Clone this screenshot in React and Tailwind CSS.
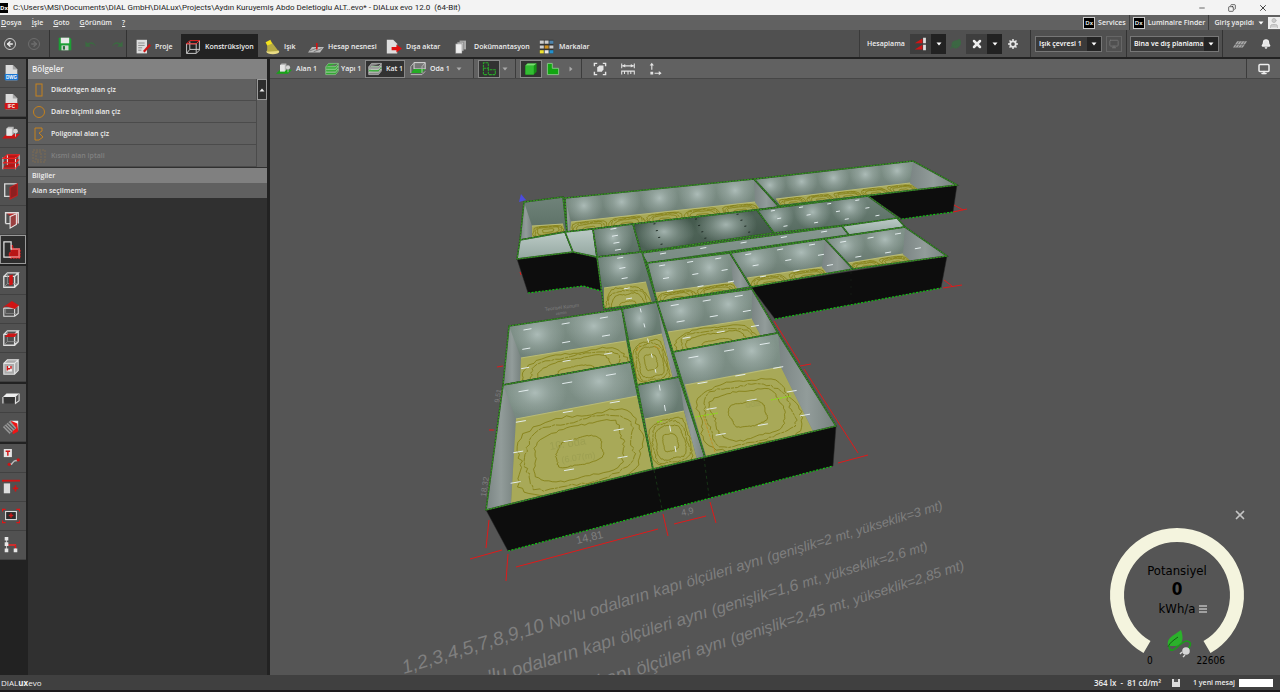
import React from 'react';
import { ArrowLeft, ArrowRight, Bell, Leaf, X, Minus, Copy, User, Monitor } from 'lucide-react';

const WHITE = '#e4e4e4';
const RED = '#d01414';

function Caret({ className = 'text-white' }) {
  return (
    <svg viewBox="0 0 6 4" className={`h-1 w-1.5 shrink-0 ${className}`}>
      <path d="M0.5 0.5H5.5L3 3.5Z" fill="currentColor" />
    </svg>
  );
}

function Icon({ children, className = 'h-[18px] w-[18px]' }) {
  return (
    <svg viewBox="0 0 20 20" fill="none" strokeWidth="1.2" className={`shrink-0 ${className}`}>
      {children}
    </svg>
  );
}

function DocIcon({ label, color }) {
  return (
    <Icon>
      <path d="M4 1H12L17 6V18H4Z" fill="#dcdcdc" />
      <path d="M12 1V6H17" fill="#a5a5a5" />
      <rect x="3" y="11" width="15" height="7" rx="1" fill={color} />
      <text x="10.5" y="16.4" textAnchor="middle" fontSize="5" fontWeight="bold" fill="#fff" fontFamily="Liberation Sans, sans-serif">{label}</text>
    </Icon>
  );
}

function SiteIcon({ ground = RED, className }) {
  return (
    <Icon className={className}>
      <path d="M0 16L5 11H20L15 16Z" fill={ground} />
      <path d="M5 5L7 3H13V11L11 13H5Z" fill="#b8b8b8" />
      <rect x="5" y="5" width="6" height="8" fill="#e6e6e6" />
      <circle cx="15" cy="8" r="2.6" fill="#d5d5d5" />
      <path d="M15 10V14" stroke="#bbb" />
    </Icon>
  );
}

function Cube({ fill }) {
  return (
    <Icon>
      <path d="M2 6H14V18H2ZM2 6L6 2H18L14 6M18 2V14L14 18" stroke="#dedede" strokeWidth="1.5" />
      <path d="M6 2V14L2 18M6 14H18" stroke="#9a9a9a" strokeWidth="0.8" />
      <path d={fill} fill={RED} />
    </Icon>
  );
}

const railGroups = [
  [
    { name: 'DWG', icon: <DocIcon label="DWG" color="#1976d2" /> },
    { name: 'IFC', icon: <DocIcon label="IFC" color={RED} /> },
  ],
  [
    { name: 'Arazi', icon: <SiteIcon /> },
    {
      name: 'Kat',
      icon: (
        <Icon>
          <path d="M1 6L6 2H19L15 6ZM1 11L6 7H19L15 11ZM1 16L6 12H19L15 16Z" fill="#b81414" />
          <path d="M1 5V18M15 5V18M19 2V14M6 2V13" stroke="#ddd" />
          <path d="M1 6H15L19 2H6ZM1 11H15L19 7M1 17H15L19 12" stroke="#f02020" />
        </Icon>
      ),
    },
    {
      name: 'Kapı',
      icon: (
        <Icon>
          <path d="M9 16H3V2H16V4" stroke="#d8d8d8" strokeWidth="1.5" />
          <path d="M9 6L17 2V15L9 19Z" fill="#8e2020" stroke="#c22020" />
        </Icon>
      ),
    },
    {
      name: 'Pencere',
      icon: (
        <Icon>
          <path d="M4 2H18V14L10 18V6Z" fill="#b82a2a" />
          <path d="M4 14V2H18V14M4 14H9" stroke="#ddd" strokeWidth="1.6" />
          <path d="M9 6L16 3V15L9 19Z" fill="#9a4040" stroke="#e6e6e6" />
        </Icon>
      ),
    },
    {
      name: 'Bölgeler',
      active: true,
      icon: (
        <Icon>
          <path d="M9 5H11V9H19V19H7V13H9Z" fill="#b81616" stroke="#e02020" strokeDasharray="2 1" />
          <path d="M1 1H9V9H18V18H1Z" stroke="#dedede" strokeWidth="1.4" />
          <path d="M10 9H18V18H9" stroke="#f04040" />
        </Icon>
      ),
    },
  ],
  [
    { name: 'Sütun', icon: <Cube fill="M8 5L12 4V15L8 16Z" /> },
    {
      name: 'Çatı',
      icon: (
        <Icon>
          <path d="M2 9H14V18H2ZM18 6V15L14 18M14 9L18 6" stroke="#ddd" />
          <path d="M0 9L11 1L19 6L14 10L5 7Z" fill="#d01414" />
          <path d="M4 10V15H16" stroke="#999" strokeWidth="0.7" />
        </Icon>
      ),
    },
    { name: 'Tavan', icon: <Cube fill="M3 9L7 5H17L14 9Z" /> },
    {
      name: 'Kesit',
      icon: (
        <Icon>
          <path d="M2 6L6 2H18V14L14 18H2Z" fill="#aaa" />
          <path d="M2 6H14V18H2ZM2 6L6 2H18L14 6M18 2V14L14 18" stroke="#e4e4e4" />
          <rect x="5" y="9" width="6" height="6" fill="#eee" />
          <path d="M6 9V14M10 9V12M6 12H9" stroke={RED} strokeWidth="1.6" />
        </Icon>
      ),
    },
  ],
  [
    {
      name: 'Mobilya',
      icon: (
        <Icon>
          <path d="M1 9L5 5H19L15 9Z" fill="#eee" />
          <path d="M1 9H15L13 16H3Z" fill="#353535" />
          <path d="M1 9V16M15 9V16L19 13V5" stroke="#ddd" />
        </Icon>
      ),
    },
    {
      name: 'Malzeme',
      icon: (
        <Icon>
          <path d="M9 3H18V14Z" fill="#eee" />
          <path d="M10 3L17 6L18 15L12 18Z" fill="#ee1515" />
          <path d="M1 10L9 3L16 11L8 18Z" fill="#999" />
          <path d="M3 9L10 16M5 7L12 14M7 5L14 12M2 12L8 18" stroke="#555" />
        </Icon>
      ),
    },
  ],
  [
    {
      name: 'Metin',
      icon: (
        <Icon>
          <rect x="2" y="0" width="9" height="9" fill="#e5e5e5" />
          <path d="M4 2.5H9M6.5 2.5V7.5" stroke={RED} strokeWidth="1.6" />
          <path d="M8 16C12 20 11 11 17 13" stroke="#bbb" strokeWidth="1.6" />
          <circle cx="8" cy="17" r="1.8" fill={RED} />
          <circle cx="18" cy="12" r="1.8" fill={RED} />
        </Icon>
      ),
    },
    {
      name: 'Hizala',
      icon: (
        <Icon>
          <path d="M0 3H20" stroke={RED} strokeWidth="2" />
          <rect x="2" y="6" width="7" height="11" fill="#dedede" />
          <path d="M15 8V15M12 11.5H18" stroke={RED} strokeWidth="1.8" />
        </Icon>
      ),
    },
    {
      name: 'Çerçeve',
      icon: (
        <Icon>
          <path d="M0.6 5V2.6H4M16 2.6H19.4V5M19.4 15V17.4H16M4 17.4H0.6V15" stroke="#e01515" />
          <rect x="4" y="5" width="12" height="9" fill="#2c2c2c" stroke="#ddd" />
          <path d="M10 7V12M7.5 9.5H12.5" stroke={RED} strokeWidth="1.6" />
        </Icon>
      ),
    },
    {
      name: 'Yapı ağacı',
      icon: (
        <Icon>
          <path d="M5 3V16M5 10H15V16" stroke="#bbb" />
          <path d="M7 10H15V14" stroke="#e01515" strokeWidth="1.6" />
          <path d="M3 1H7V5H3ZM3 7H7V11H3ZM3 14H7V18H3ZM13 14H17V18H13Z" fill="#e6e6e6" />
        </Icon>
      ),
    },
  ],
];

const modes = [
  {
    name: 'Proje',
    width: 'w-[54px]',
    icon: (
      <Icon className="h-4 w-4">
        <path d="M2 1H15V18H2Z" fill="#ddd" />
        <path d="M4 5H12M4 8H12M4 11H9M4 14H8" stroke="#888" />
        <path d="M10 15L18 6L20 8L12 17Z" fill={RED} />
      </Icon>
    ),
  },
  {
    name: 'Konstrüksiyon',
    width: 'w-[77px]',
    active: true,
    icon: (
      <Icon className="h-4 w-4">
        <path d="M2 6H14V18H2ZM14 6L18 2V14L14 18M2 18L6 13H18M6 3V13" stroke="#ccc" />
        <path d="M2 6L6 2H18L14 6Z" stroke="#f02020" />
      </Icon>
    ),
  },
  {
    name: 'Işık',
    width: 'w-[44px]',
    icon: (
      <Icon className="h-4 w-4">
        <ellipse cx="11" cy="16" rx="8" ry="3" fill="#e9dc85" />
        <path d="M4 5L9 3L18 15L4 16Z" fill="#b5aa45" />
        <path d="M2 4L8 1L10 6L4 8Z" fill="#f2e21c" />
      </Icon>
    ),
  },
  {
    name: 'Hesap nesnesi',
    width: 'w-[78px]',
    icon: (
      <Icon className="h-4 w-4">
        <path d="M0 17L5 10H20L15 17Z" fill="#bbb" />
        <path d="M2 15L12 11M7 16L17 12" stroke="#777" />
        <path d="M11 5V13" stroke={RED} strokeWidth="2" />
      </Icon>
    ),
  },
  {
    name: 'Dışa aktar',
    width: 'w-[68px]',
    icon: (
      <Icon className="h-4 w-4">
        <path d="M1 1H9L14 6V18H1Z" fill="#dedede" />
        <path d="M7 10H13V7L20 12L13 17V14H7Z" fill="#e01010" />
      </Icon>
    ),
  },
  {
    name: 'Dokümantasyon',
    width: 'w-[85px]',
    icon: (
      <Icon className="h-4 w-4">
        <path d="M7 2H15V13H7Z" fill="#aaa" />
        <path d="M4 4H12V15H4Z" fill="#c5c5c5" stroke="#666" strokeWidth="0.6" />
        <path d="M2 6H10V18H2Z" fill="#eee" stroke="#777" strokeWidth="0.6" />
      </Icon>
    ),
  },
  {
    name: 'Markalar',
    width: 'w-[54px]',
    icon: (
      <Icon className="h-4 w-4">
        <path d="M1 1H18V18H1Z" fill="#333" />
        <path d="M1 2H6V6H1ZM7 2H12V6H7ZM1 8H6V12H1ZM13 8H18V12H13Z" fill="#ccc" />
        <path d="M13 2H18V6H13Z" fill="#4d84ae" />
        <path d="M7 8H12V12H7Z" fill="#d09020" />
        <path d="M1 14H6V18H1Z" fill="#eee12e" />
        <path d="M7 14H12V18H7Z" fill="#e8e8e8" />
        <path d="M13 14H18V18H13Z" fill="#2191cf" />
      </Icon>
    ),
  },
];

const regionTools = [
  { name: 'Dikdörtgen alan çiz', shape: <rect x="4" y="1" width="6" height="12" /> },
  { name: 'Daire biçimli alan çiz', shape: <circle cx="7" cy="7" r="5.5" /> },
  { name: 'Poligonal alan çiz', shape: <path d="M3 1H10V4L7 6L11 10L7 13H3Z" /> },
  { name: 'Kısmi alan iptali', disabled: true, shape: <path d="M1 1H13V13H1ZM4 3H9V11H4Z" strokeDasharray="2 1" /> },
];

// Corners run clockwise from the far left one.
const rooms = [
  { id: 'a', top: [[524, 202], [563, 197], [567, 232], [520, 240]], floor: [[532, 226], [563, 224], [565, 232], [532, 238]], left: true, tone: 'dim' },
  { id: 'b', top: [[565, 198], [754, 179], [779, 207], [567, 232]], floor: [[571, 222], [755, 202], [760, 209], [570, 231]], left: true, right: true, spots: 5, cells: 5, tone: 'mid' },
  { id: 'c', top: [[754, 179], [913, 161], [957, 185], [779, 206]], floor: [[776, 199], [910, 183], [918, 189], [780, 205]], right: true, spots: 5, cells: 5, tone: 'mid' },
  { id: 'd', top: [[520, 240], [565, 232], [573, 252], [517, 259]], tone: 'light' },
  { id: 'e', top: [[565, 232], [593, 229], [597, 257], [573, 252]], tone: 'light' },
  { id: 'f', top: [[593, 229], [633, 224], [641, 252], [597, 257]], spots: 1, lamps: [1, 4], half: 3, tone: 'dim' },
  { id: 'g', top: [[633, 224], [757, 210], [774, 233], [641, 252]], spots: 2, lamps: [3, 4], half: 1, darkLamps: true, tone: 'dark' },
  { id: 'h', top: [[757, 210], [868, 196], [900, 219], [774, 233]], spots: 3, lamps: [4, 3], half: 2, tone: 'dim' },
  { id: 'i', top: [[641, 253], [842, 226], [849, 235], [647, 263]], lamps: [5, 1], half: 3, tone: 'flat' },
  { id: 'j', top: [[842, 226], [897, 218], [905, 227], [849, 235]], tone: 'light' },
  { id: 'k', top: [[597, 257], [642, 252], [657, 302], [604, 309]], floor: [[604, 288], [646, 282], [652, 303], [604, 309]], cells: 1, spots: 1, lamps: [1, 5], half: 3, tone: 'dim' },
  { id: 'l', top: [[647, 263], [730, 253], [751, 287], [657, 302]], floor: [[655, 293], [733, 282], [738, 289], [657, 302]], right: true, spots: 2, cells: 2, lamps: [3, 3], half: 3, tone: 'mid' },
  { id: 'm', top: [[730, 253], [825, 239], [853, 269], [751, 287]], floor: [[747, 278], [822, 267], [827, 273], [751, 287]], right: true, spots: 2, cells: 2, lamps: [3, 3], half: 3, tone: 'mid' },
  { id: 'n', top: [[825, 239], [905, 227], [947, 256], [853, 269]], floor: [[848, 263], [903, 254], [911, 261], [853, 269]], right: true, spots: 2, cells: 2, lamps: [3, 2], half: 3, tone: 'mid' },
  { id: 'o', top: [[509, 326], [622, 309], [631, 362], [503, 385]], floor: [[521, 358], [626, 341], [631, 362], [520, 381]], left: true, spots: 2, cells: 1, lamps: [3, 3], half: 4, tone: 'mid' },
  { id: 'p', top: [[622, 309], [657, 302], [679, 377], [637, 385]], floor: [[629, 341], [662, 334], [673, 378], [637, 385]], right: true, spots: 1, lamps: [1, 5], half: 2, upright: true, tone: 'dim' },
  { id: 'q', top: [[657, 302], [752, 289], [778, 333], [673, 352]], floor: [[668, 332], [752, 319], [761, 336], [673, 352]], right: true, spots: 2, cells: 1, lamps: [3, 3], half: 4, tone: 'mid' },
  { id: 'r', top: [[503, 385], [631, 362], [653, 469], [486, 510]], floor: [[516, 419], [637, 396], [653, 469], [511, 503]], left: true, spots: 2, lamps: [3, 4], half: 5, tone: 'mid' },
  { id: 's', top: [[637, 385], [679, 377], [705, 457], [653, 469]], floor: [[645, 419], [684, 411], [697, 459], [653, 469]], right: true, spots: 1, lamps: [1, 4], half: 3, upright: true, tone: 'dim' },
  { id: 't', top: [[673, 352], [778, 333], [836, 426], [705, 457]], floor: [[685, 385], [781, 367], [813, 431], [706, 456]], right: true, spots: 2, lamps: [3, 4], half: 5, tone: 'mid' },
];

const outerWalls = [
  '868,196 957,185 953,212 902,219',
  '517,259 573,252 597,258 602,291 583,286 528,293',
  '751,287 947,256 941,288 775,319',
  '486,510 836,426 833,466 508,551',
];

const baseEdges = ['902,219 953,212', '528,293 583,286 601,291', '775,319 941,288', '508,551 833,466'];

const measureLines = [
  'M470 559L502 550', 'M489 520L486 548', 'M508 554L506 581', 'M516 567L658 529', 'M663 514L668 536',
  'M674 524L706 516', 'M710 502L716 523', 'M774 321L800 363', 'M804 369L858 453', 'M800 366L811 364',
  'M838 463L868 455', 'M944 280L952 286', 'M943 288L962 285', 'M954 205L963 210', 'M953 212L967 209',
  'M497 367L503 366', 'M489 430L494 430', 'M520 272L521 275',
];

const notes = [
  {
    x: 404, y: 674, angle: -17,
    words: [['1,2,3,4,5,7,8,9,10 ', 19], ["No'lu ", 17], ['odaların ', 17], ['kapı ', 16], ['ölçüleri ', 15], ['aynı ', 15], ['(genişlik=2 ', 14], ['mt, ', 13], ['yükseklik=3 ', 13], ['mt)', 13]],
  },
  {
    x: 490, y: 684, angle: -17,
    words: [["'lu ", 20], ['odaların ', 19], ['kapı ', 18], ['ölçüleri ', 17], ['aynı ', 17], ['(genişlik=1,6 ', 16], ['mt, ', 14], ['yükseklik=2,6 ', 14], ['mt)', 13]],
  },
  {
    x: 599, y: 688, angle: -18,
    words: [['kapı ', 19], ['ölçüleri ', 18], ['aynı ', 17], ['(genişlik=2,45 ', 16], ['mt, ', 15], ['yükseklik=2,85 ', 14], ['mt)', 14]],
  },
];

const pts = (list) => list.map((p) => p.join(',')).join(' ');

function mix([a, b, c, d], u, v) {
  return [0, 1].map((k) => (a[k] * (1 - u) + b[k] * u) * (1 - v) + (d[k] * (1 - u) + c[k] * u) * v);
}

// Isolux curves: rings round the middle of a floor, or arches over each light cell of a shallow one.
function contour(floor, scale, seed, cells, cell) {
  const steps = 72;
  const cu = cells ? (cell + 0.5) / cells : 0.5;
  const cv = cells ? 1.15 : 0.56;
  const ru = cells ? 1 / cells : 1;
  const rv = cells ? 2.2 : 1;
  let d = '';
  for (let i = 0; i <= steps; i += 1) {
    const k = i % steps;
    const t = (k / steps) * Math.PI * 2;
    const wobble = 1 + 0.03 * Math.sin(t * 3 + seed) + 0.03 * Math.sin(t * 7 + seed * 3) + 0.03 * Math.sin(k * 2.7 + seed) * Math.sin(k * 0.4 + seed);
    const soft = (Math.cos(t) ** 4 + Math.sin(t) ** 4) ** 0.25;
    const r = (scale * wobble) / soft;
    const [x, y] = mix(floor, cu + ru * r * Math.cos(t), cv + rv * r * Math.sin(t));
    d += `${i === 0 ? 'M' : 'L'}${x.toFixed(1)} ${y.toFixed(1)}`;
  }
  return d;
}

function Room({ room, index }) {
  const { id, top, floor, left, right, spots = 0, cells, lamps, half, darkLamps, upright, tone } = room;
  const width = top[1][0] - top[0][0];
  const depth = floor ? floor[0][1] - top[0][1] : top[3][1] - top[0][1];
  const marks = [];
  if (lamps) {
    for (let i = 0; i < lamps[0]; i += 1) {
      for (let j = 0; j < lamps[1]; j += 1) {
        marks.push(mix(top, (i + 0.5) / lamps[0], (j + 0.32) / lamps[1]));
      }
    }
  }
  const curves = [];
  for (let cell = 0; cell < (cells || 1); cell += 1) {
    [0.46, 0.4, 0.33, 0.17].forEach((s, i) => curves.push({ key: `${cell}-${i}`, d: floor && contour(floor, s, index * 2 + i + cell, cells, cell), i }));
  }
  return (
    <g>
      <clipPath id={`room-${id}`}><polygon points={pts(top)} /></clipPath>
      <g clipPath={`url(#room-${id})`}>
        <polygon points={pts(top)} fill={`url(#${tone})`} />
        {Array.from({ length: spots }, (_, i) => {
          const [x, y] = mix(top, (i + 0.5) / spots, 0);
          return <ellipse key={i} cx={x} cy={y + depth * 0.4} rx={(width / spots) * 0.5} ry={depth * 0.75} fill="url(#glow)" />;
        })}
        {left && floor && <polygon points={pts([top[0], floor[0], floor[3], top[3]])} fill="url(#side)" />}
        {floor && (
          <>
            <clipPath id={`floor-${id}`}><polygon points={pts(floor)} /></clipPath>
            <polygon points={pts(floor)} fill="#a8a958" />
            <g clipPath={`url(#floor-${id})`} fill="none" stroke="#827c10" strokeWidth="0.8">
              {curves.map(({ key, d, i }) => <path key={key} d={d} strokeDasharray={i === 1 ? '9 1 3 1' : undefined} />)}
            </g>
            <path d={`M${floor[0]}L${floor[1]}`} stroke="#b9bb74" strokeWidth="1.2" />
          </>
        )}
        {right && floor && <polygon points={pts([top[1], top[2], floor[2], floor[1]])} fill="url(#side)" />}
      </g>
      <polygon points={pts(top)} fill="none" stroke="#2c5227" strokeWidth="1.6" />
      <polygon points={pts(top)} fill="none" stroke="#37a01f" strokeWidth="1" strokeDasharray="2 1" />
      {marks.map(([x, y]) => (
        <path
          key={`${x}-${y}`}
          d={upright ? `M${x - 0.5} ${y - half}L${x + 0.5} ${y + half}` : `M${x - half} ${y + half * 0.17}L${x + half} ${y - half * 0.17}`}
          stroke={darkLamps ? '#1f2b25' : '#e3eced'}
          strokeWidth="1"
        />
      ))}
    </g>
  );
}

function Scene() {
  return (
    <svg viewBox="270 79 1010 596" preserveAspectRatio="xMidYMid slice" className="absolute inset-0 h-full w-full" role="img" aria-label="Kat 1">
      <defs>
        <linearGradient id="mid" x1="0" y1="0" x2="0" y2="1"><stop offset="0" stopColor="#82948b" /><stop offset="0.5" stopColor="#74867d" /><stop offset="1" stopColor="#62736a" /></linearGradient>
        <linearGradient id="dim" x1="0" y1="0" x2="0" y2="1"><stop offset="0" stopColor="#70837a" /><stop offset="1" stopColor="#566b60" /></linearGradient>
        <linearGradient id="flat" x1="0" y1="0" x2="0" y2="1"><stop offset="0" stopColor="#879891" /><stop offset="1" stopColor="#798b83" /></linearGradient>
        <linearGradient id="dark" x1="0" y1="0" x2="1" y2="1"><stop offset="0" stopColor="#354b3e" /><stop offset="0.5" stopColor="#4d6256" /><stop offset="1" stopColor="#3c4f44" /></linearGradient>
        <linearGradient id="light" x1="0" y1="0" x2="0" y2="1"><stop offset="0" stopColor="#bccbc7" /><stop offset="1" stopColor="#94a7a0" /></linearGradient>
        <linearGradient id="side" x1="0" y1="0" x2="1" y2="0"><stop offset="0" stopColor="#7b8584" /><stop offset="0.5" stopColor="#929c9a" /><stop offset="1" stopColor="#77827f" /></linearGradient>
        <radialGradient id="glow"><stop offset="0" stopColor="#b9c8c5" stopOpacity="0.8" /><stop offset="0.5" stopColor="#a9b8b4" stopOpacity="0.4" /><stop offset="1" stopColor="#a9b8b4" stopOpacity="0" /></radialGradient>
      </defs>
      {outerWalls.map((wall) => <polygon key={wall} points={wall} fill="#0d0d0d" stroke="#2b2b2b" strokeWidth="0.5" />)}
      {rooms.map((room, index) => <Room key={room.id} room={room} index={index} />)}
      <g fill="none" stroke="#12c412" strokeWidth="1.2" strokeDasharray="2 1.5">
        {baseEdges.map((edge) => <polyline key={edge} points={edge} />)}
      </g>
      <path d="M654 470L662 509M704 458L709 496" stroke="#1a3d18" strokeWidth="0.8" strokeDasharray="3 3" />
      <path d="M851 272L851 303" stroke="#182418" strokeWidth="0.6" strokeDasharray="2 5" />
      <path d="M771 400L791 396M695 417L718 413M657 422L663 421" stroke="#86e80b" strokeWidth="1" strokeDasharray="2 1" />
      <path d="M703 415L715 452M637 351L640 345M654 346L660 349" stroke="#c08a1c" strokeWidth="0.8" strokeDasharray="3 1" />
      <path d={measureLines.join('')} stroke="#e01a1a" strokeWidth="1" />
      <path d="M519 202L521 194L526 200Z" fill="#4c4cdd" />
      <g fill="#7f7f7f" fontFamily="Liberation Sans, Arial, sans-serif">
        <text transform="rotate(-13 577 544)" x="577" y="544" fontSize="11">14,81</text>
        <text transform="rotate(-13 682 516)" x="682" y="516" fontSize="9">4,9</text>
        <text transform="rotate(-82 486 497)" x="486" y="497" fontSize="8">18,32</text>
        <text transform="rotate(-80 499 403)" x="499" y="403" fontSize="7">9,51</text>
        <text transform="rotate(-7 545 311)" x="545" y="311" fontSize="5">Teorisel Konum</text>
        <text transform="rotate(-7 556 315)" x="556" y="315" fontSize="4">zemin</text>
        {notes.map((note) => (
          <text key={note.x} x={note.x} y={note.y} transform={`rotate(${note.angle} ${note.x} ${note.y})`} fontStyle="italic" xmlSpace="preserve">
            {note.words.map(([word, size]) => <tspan key={word} fontSize={size}>{word}</tspan>)}
          </text>
        ))}
      </g>
      <g fill="#9a9d50" fontFamily="Liberation Sans, Arial, sans-serif" opacity="0.8">
        <text transform="rotate(-9 550 450)" x="550" y="450" fontSize="11">10. oda</text>
        <text transform="rotate(-9 562 463)" x="562" y="463" fontSize="9">(6.07(m)</text>
        <text transform="rotate(-9 746 408)" x="746" y="408" fontSize="9">oda</text>
      </g>
    </svg>
  );
}

function Gauge() {
  return (
    <aside className="absolute right-[33px] bottom-1.5 h-[161px] w-[140px] text-black">
      <button type="button" aria-label="Kapat" className="absolute top-0 right-0 text-[#c4c4c4]"><X className="h-3.5 w-3.5" strokeWidth={3} /></button>
      <svg viewBox="0 0 140 140" className="absolute top-[17px] left-0 w-full">
        <path d="M40 122A60 60 0 1 1 100 122" fill="none" stroke="#f4f4de" strokeWidth="14" />
        <path d="M61 121C59 113 66 111 74 105C77 113 76 121 68 121Z" fill="#2bb12b" />
        <path d="M61 122C63 117 67 115 71 112" fill="none" stroke="#145c14" />
        <path d="M62 121C64 133 73 116 80 116C86 117 83 122 80 125" fill="none" stroke="#1c9a1c" strokeWidth="1.6" />
        <circle cx="79" cy="126" r="3.8" fill="#d6d6d6" />
        <path d="M75 127L73 129M78 130L76 132" stroke="#d6d6d6" strokeWidth="1.4" />
      </svg>
      <div className="absolute inset-x-0 top-[53px] flex flex-col items-center text-[13px] leading-5">
        <span>Potansiyel</span>
        <strong className="text-[17px] leading-[17px]">0</strong>
        <span className="ml-3 flex items-center gap-1 leading-[22px]">
          kWh/a
          <svg viewBox="0 0 8 8" className="h-2 w-2"><path d="M0 1H8M0 4H8M0 7H8" stroke="#bbb" strokeWidth="1.5" /></svg>
        </span>
      </div>
      <div className="absolute inset-x-0 bottom-0 flex justify-between pr-[22px] pl-10 text-[10px] leading-4">
        <span>0</span>
        <span>22606</span>
      </div>
    </aside>
  );
}

function Picker({ label, value, className }) {
  return (
    <span className={`relative flex h-4 items-stretch border border-[#777] bg-[#3a3a3a] ${className}`}>
      <select aria-label={label} defaultValue={value} className="w-full appearance-none pl-[3px] text-[7px] font-semibold text-white">
        <option>{value}</option>
      </select>
      <span className="pointer-events-none absolute inset-y-0 right-0 flex w-3.5 items-center justify-center bg-[#242424]"><Caret /></span>
    </span>
  );
}

function DxBadge() {
  return <span className="flex h-3 w-3 items-center justify-center border border-[#ccc] bg-black text-[6px] leading-none text-white">Dx</span>;
}

function TopBars() {
  return (
    <header>
      <div className="flex h-[15px] items-center bg-[#f3f3f3] text-[#222]">
        <span className="flex h-2.5 w-2 items-center justify-center bg-black text-[6px] font-bold text-white">Dx</span>
        <h1 className="ml-[5px] flex-1 whitespace-pre font-['Roboto','Noto_Sans',sans-serif] text-[8px] font-normal">{'C:\\Users\\MSI\\Documents\\DIAL GmbH\\DIALux\\Projects\\Aydın Kuruyemiş Abdo Deletioglu ALT..evo* - DIALux evo 12.0  (64-Bit)'}</h1>
        <div className="flex items-center gap-[22px] pr-3">
          <button type="button" aria-label="Simge durumuna küçült"><Minus className="h-2 w-2" strokeWidth={2} /></button>
          <button type="button" aria-label="Önceki boyut"><Copy className="h-2 w-2 -scale-x-100" strokeWidth={2} /></button>
          <button type="button" aria-label="Pencereyi kapat"><X className="h-2.5 w-2.5" strokeWidth={2} /></button>
        </div>
      </div>

      <div className="flex h-[15px] items-center bg-[#616161]">
        <nav className="flex flex-1 gap-2.5 pl-px">
          {['Dosya', 'İşle', 'Goto', 'Görünüm', '?'].map((item) => (
            <button key={item} type="button"><u>{item[0]}</u>{item.slice(1)}</button>
          ))}
        </nav>
        <button type="button" className="flex h-full items-center gap-[3px] border-r border-[#3c3c3c] pr-[3px]"><DxBadge />Services</button>
        <button type="button" className="flex h-full items-center gap-[3px] border-r border-[#3c3c3c] px-[3px]"><DxBadge />Luminaire Finder</button>
        <button type="button" className="flex h-full items-center gap-1 pl-[5px]">
          Giriş yapıldı <Caret />
          <span className="flex h-3 w-3 items-center justify-center bg-[#eee]"><User className="h-3 w-3 text-[#bbb]" fill="#ccc" /></span>
        </button>
      </div>

      <div className="flex h-[29px] items-center border-b-2 border-[#222] bg-[#505050]">
        <div className="flex h-full w-[50px] items-center gap-3 border-r border-[#333] pl-1">
          <button type="button" aria-label="Geri" className="rounded-full border border-[#ccc] p-px"><ArrowLeft className="h-2 w-2" strokeWidth={4} /></button>
          <button type="button" aria-label="İleri" className="rounded-full border border-[#6d6d6d] p-px text-[#6d6d6d]"><ArrowRight className="h-2 w-2" strokeWidth={4} /></button>
        </div>
        <div className="flex h-full w-[77px] items-center gap-3 border-r border-[#333] pl-2">
          <button type="button" aria-label="Kaydet">
            <Icon className="h-3.5 w-3.5">
              <path d="M1 1H17L19 3V19H1Z" fill="#1c9e35" />
              <path d="M4 1H16V9H4Z" fill="#e9e9e9" />
              <path d="M5 12H15V19H5Z" fill="#d4d4d4" />
              <path d="M7 13H10V18H7Z" fill="#28713a" />
            </Icon>
          </button>
          <button type="button" aria-label="Geri al">
            <Icon className="h-3.5 w-3.5"><path d="M2 6V14H10L7 11Q12 7 17 14Q14 4 5 9Z" fill="#3b6a41" /></Icon>
          </button>
          <button type="button" aria-label="Yinele">
            <Icon className="h-3.5 w-3.5"><path d="M18 6V14H10L13 11Q8 7 3 14Q6 4 15 9Z" fill="#3b6a41" /></Icon>
          </button>
        </div>
        <nav className="flex h-full flex-1 items-end border-r border-[#3a3a3a]">
          {modes.map((mode) => (
            <button
              key={mode.name}
              type="button"
              className={`flex h-[23px] items-center gap-1 pt-0.5 whitespace-nowrap first:pl-2 ${mode.width} ${mode.active ? 'bg-[#222] pl-1' : 'pl-1.5'}`}
            >
              {mode.icon}
              {mode.name}
            </button>
          ))}
        </nav>
        <div className="flex h-full w-[171px] items-center border-r border-[#333] pl-[7px]">
          <span className="w-[43px]">Hesaplama</span>
          <button type="button" aria-label="Hesapla" className="flex h-5 w-[21px] items-center justify-center bg-[#3e3e3e]">
            <Icon className="h-3.5 w-3.5">
              <path d="M1 9L12 2V9ZM1 18L12 11V18Z" fill="#cf1515" />
              <path d="M13 1H17V9H13ZM13 11H17V19H13Z" fill="#ddd" />
            </Icon>
          </button>
          <button type="button" aria-label="Hesaplama seçenekleri" className="flex h-5 w-[15px] items-center justify-center bg-[#222]"><Caret /></button>
          <Leaf className="mx-1 h-3 w-3 text-[#3c6743]" fill="#3c6743" />
          <button type="button" aria-label="Durdur" className="flex h-5 w-[21px] items-center justify-center bg-[#3e3e3e]"><X className="h-3 w-3" strokeWidth={5} /></button>
          <button type="button" aria-label="Durdurma seçenekleri" className="flex h-5 w-[15px] items-center justify-center bg-[#222]"><Caret /></button>
          <button type="button" aria-label="Ayarlar" className="ml-1.5">
            <Icon className="h-2.5 w-2.5">
              <circle cx="10" cy="10" r="5.5" stroke={WHITE} strokeWidth="3.5" />
              <path d="M10 0V4M10 16V20M0 10H4M16 10H20M3 3L6 6M14 14L17 17M17 3L14 6M6 14L3 17" stroke={WHITE} strokeWidth="3" />
            </Icon>
          </button>
        </div>
        <div className="flex h-full items-center gap-1 border-r border-[#333] px-1">
          <Picker label="Işık çevresi" value="Işık çevresi 1" className="w-[67px]" />
          <button type="button" aria-label="Görünüm" className="flex h-4 w-4 items-center justify-center border border-[#666] text-[#777]"><Monitor className="h-2.5 w-2.5" /></button>
        </div>
        <div className="flex h-full items-center border-r border-[#333] px-[3px]">
          <Picker label="Planlama" value="Bina ve dış planlama" className="w-[89px]" />
        </div>
        <div className="flex w-[57px] items-center gap-3.5 pl-2.5">
          <Icon className="h-3.5 w-3.5">
            <path d="M0 15L6 6H20L14 15Z" fill="#aaa" />
            <path d="M3 15L9 6M7 15L13 6M11 15L17 6M3 11H17" stroke="#666" />
          </Icon>
          <Bell className="h-2.5 w-2.5" fill="#e5e5e5" strokeWidth={3} />
        </div>
      </div>
    </header>
  );
}

function Stack({ level }) {
  const g = '#32aa32';
  return (
    <Icon className="h-3.5 w-3.5">
      {[15, 11, 7].map((y, i) => (
        <path key={y} d={`M1 ${y}L5 ${y - 5}H19L15 ${y}ZM1 ${y}V${y + 3}H15L19 ${y - 2}V${y - 5}`} fill={level === 'all' || i === 1 ? g : '#888'} stroke={level === 'all' ? '#9fd79f' : '#ddd'} strokeWidth="0.8" />
      ))}
    </Icon>
  );
}

function ViewBar() {
  const tab = 'flex h-[18px] items-center gap-1 whitespace-nowrap border';
  return (
    <div className="flex h-5 items-center border-b border-[#464646] bg-[#616161] pl-[5px]">
      <button type="button" className={`${tab} w-[49px] border-transparent`}><SiteIcon ground="#16a516" className="h-4 w-4" />Alan 1</button>
      <button type="button" className={`${tab} w-[41px] border-transparent`}><Stack level="all" /><span className="-mx-0.5">Yapı 1</span></button>
      <button type="button" className={`${tab} w-10 gap-0.5 border-[#888] bg-[#323232] pl-0.5`}><Stack />Kat 1</button>
      <button type="button" className={`${tab} w-[48px] border-transparent pl-1`}>
        <Icon className="h-4 w-4">
          <path d="M5 10V2H19V10Z" fill="#777" stroke="#ddd" />
          <path d="M1 15L5 10H19L15 15Z" fill="#25ab25" />
          <path d="M1 15V7L5 2M15 15V7L19 2M1 17H15L19 13" stroke="#bbb" />
        </Icon>
        Oda 1
      </button>
      <button type="button" aria-label="Oda seç" className="flex h-full w-[21px] items-center border-r border-[#3c3c3c] pl-[3px]"><Caret className="text-[#aaa]" /></button>
      <button type="button" aria-label="Kat planı" className="ml-1 flex h-[18px] w-[22px] items-center justify-center border border-[#888] bg-[#323232]">
        <Icon className="h-3.5 w-3.5">
          <path d="M9 1H2V18H8M2 9H9V1M9 9V18H19V11H9" stroke="#2aa92a" strokeWidth="1.5" strokeDasharray="4 1" />
        </Icon>
      </button>
      <button type="button" aria-label="Plan seçenekleri" className="flex h-full w-4 items-center border-r border-[#3c3c3c] pl-0.5"><Caret className="text-[#aaa]" /></button>
      <button type="button" aria-label="3B görünüm" className="ml-1 flex h-[18px] w-[22px] items-center justify-center border border-[#888] bg-[#323232]">
        <Icon className="h-3.5 w-3.5">
          <path d="M2 5L5 2H18V14L14 18H2Z" fill="#159015" />
          <path d="M2 5H14V18H2Z" fill="#32bd32" />
          <path d="M2 5L5 2H18L14 5Z" fill="#7bdd73" />
        </Icon>
      </button>
      <button type="button" aria-label="Plan" className="ml-1">
        <Icon className="h-3.5 w-3.5">
          <path d="M2 2H9V9H18V18H2Z" fill="#11a611" stroke="#8fce8f" />
        </Icon>
      </button>
      <button type="button" aria-label="Diğer görünümler" className="flex h-full w-[22px] items-center border-r border-[#3c3c3c] pl-2"><Caret className="-rotate-90 text-[#aaa]" /></button>
      <div className="ml-[11px] flex flex-1 items-center gap-3.5">
        <button type="button" aria-label="Sığdır">
          <Icon className="h-3.5 w-3.5">
            <path d="M2 6V2H6M14 2H18V6M18 14V18H14M6 18H2V14" stroke={WHITE} strokeWidth="2" />
            <path d="M7 7L9 5H15V11L13 13V14H6V7Z" fill={WHITE} />
          </Icon>
        </button>
        <button type="button" aria-label="Ölç">
          <Icon className="h-3.5 w-3.5">
            <path d="M1 2V9M19 2V9M2 5.5H18M1 18V13H19V18M5 13V17M10 13V18M14 13V17" stroke={WHITE} strokeWidth="1.5" />
            <path d="M2 5.5L6 3V8ZM18 5.5L14 3V8Z" fill={WHITE} />
          </Icon>
        </button>
        <button type="button" aria-label="Eksenler">
          <Icon className="h-3.5 w-3.5">
            <path d="M4 4V11M8 16H15" stroke={WHITE} strokeWidth="1.6" />
            <path d="M4 1L7 5H1ZM18 16L14 13V19ZM2 14H6V18H2Z" fill={WHITE} />
          </Icon>
        </button>
      </div>
      <button type="button" aria-label="Ekran" className="flex h-full w-[34px] items-center justify-center border-l border-[#3c3c3c]"><Monitor className="h-3 w-3" strokeWidth={3} /></button>
    </div>
  );
}

export default function App() {
  return (
    <div className="flex h-screen flex-col overflow-hidden bg-[#222] font-['Open_Sans','Noto_Sans',sans-serif] text-[7px] font-semibold leading-3 text-[#eee]">
      <TopBars />
      <main className="flex min-h-0 flex-1">
        <nav className="flex w-[26px] flex-col gap-0.5">
          {railGroups.map((group) => (
            <div key={group[0].name} className="flex flex-col">
              {group.map((tool) => (
                <button
                  key={tool.name}
                  type="button"
                  aria-label={tool.name}
                  className={`flex h-[29px] items-center pl-0.5 ${tool.active ? 'border border-[#999] bg-[#2d2d2d]' : 'border-b border-[#414141] bg-[#515151]'}`}
                >
                  {tool.icon}
                </button>
              ))}
            </div>
          ))}
        </nav>

        <section className="ml-0.5 flex w-[239px] flex-col bg-[#303030]">
          <h2 className="bg-[#828282] px-1 text-[8px] leading-5">Bölgeler</h2>
          <div className="flex bg-[#606060]">
            <ul className="flex-1">
              {regionTools.map((tool) => (
                <li key={tool.name} className="border-b border-[#4b4b4b]">
                  <button type="button" disabled={tool.disabled} className="flex h-[21px] w-full items-center gap-[5px] pl-1 disabled:text-[#818181]">
                    <svg viewBox="0 0 14 14" fill="none" stroke={tool.disabled ? '#7c6a50' : '#c5811c'} className="h-3.5 w-3.5">{tool.shape}</svg>
                    {tool.name}
                  </button>
                </li>
              ))}
            </ul>
            <div className="w-[11px] border-l border-[#4b4b4b]">
              <button type="button" aria-label="Yukarı kaydır" className="flex h-[21px] w-full items-center justify-center border border-[#999] bg-[#2d2d2d]"><Caret className="rotate-180" /></button>
            </div>
          </div>
          <h2 className="mt-px bg-[#808080] px-1 leading-[15px]">Bilgiler</h2>
          <p className="bg-[#606060] px-1 leading-[15px]">Alan seçilmemiş</p>
        </section>

        <section className="ml-[3px] flex min-w-0 flex-1 flex-col">
          <ViewBar />
          <div className="relative flex-1 overflow-hidden bg-[#555] font-['DejaVu_Sans_Condensed','Noto_Sans',sans-serif] font-normal">
            <Scene />
            <Gauge />
          </div>
        </section>
      </main>
      <footer className="flex h-[17px] items-center border-b-2 border-[#1d1a1d] bg-[#404040] pl-px pr-[7px]">
        <span className="flex-1 text-[8px] font-normal">DIAL<b>ux</b>evo</span>
        <span className="text-[8px]">364 lx&nbsp; -&nbsp; 81 cd/m²</span>
        <svg viewBox="0 0 10 10" className="mr-3 ml-2.5 h-2.5 w-2.5"><path d="M1 1H9V9H1Z" fill="#ddd" /><path d="M3 1H7V4H3Z" fill="#555" /></svg>
        <span>1 yeni mesaj</span>
        <span className="ml-1 h-2 w-[34px] bg-white" />
      </footer>
    </div>
  );
}
